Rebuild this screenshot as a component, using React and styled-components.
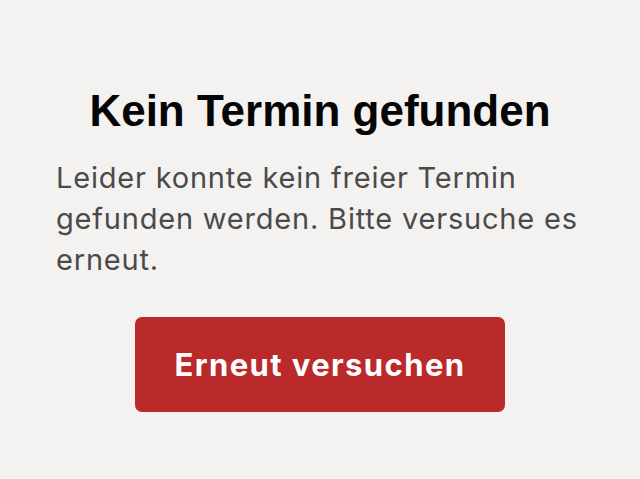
import React from 'react';
import styled, {createGlobalStyle} from 'styled-components';

const GlobalStyle = createGlobalStyle`
    html, body {
        margin: 0;
        padding: 0;
        background: #f4f2f0;
    }
`;

const Page = styled.div`
    width: 640px;
    height: 479px;
    box-sizing: border-box;
    padding: 85px 56px 0 56px;
    display: flex;
    flex-direction: column;
    align-items: center;
    background: #f4f2f0;
`;

const Title = styled.h1`
    margin: 0;
    font-family: 'Liberation Sans', Arial, sans-serif;
    font-size: 44px;
    font-weight: 700;
    line-height: 52px;
    color: #050505;
    text-align: center;
`;

const Message = styled.p`
    margin: 20px 0 0 0;
    align-self: stretch;
    font-family: Inter, 'Noto Sans', sans-serif;
    font-size: 29px;
    font-weight: 400;
    line-height: 41px;
    letter-spacing: 0.8px;
    color: #4a4a4a;
`;

const RetryButton = styled.button`
    margin-top: 37px;
    width: 370px;
    height: 95px;
    border: none;
    border-radius: 7px;
    background: #ba2a2b;
    color: #ffffff;
    font-family: Inter, 'Noto Sans', sans-serif;
    font-size: 31px;
    font-weight: 700;
    letter-spacing: 1.4px;
    cursor: pointer;
`;

export default function App() {
    return (
        <>
            <GlobalStyle/>
            <Page>
                <Title>{'Kein Termin gefunden'}</Title>
                <Message>{'Leider konnte kein freier Termin gefunden werden. Bitte versuche es erneut.'}</Message>
                <RetryButton>{'Erneut versuchen'}</RetryButton>
            </Page>
        </>
    );
}
